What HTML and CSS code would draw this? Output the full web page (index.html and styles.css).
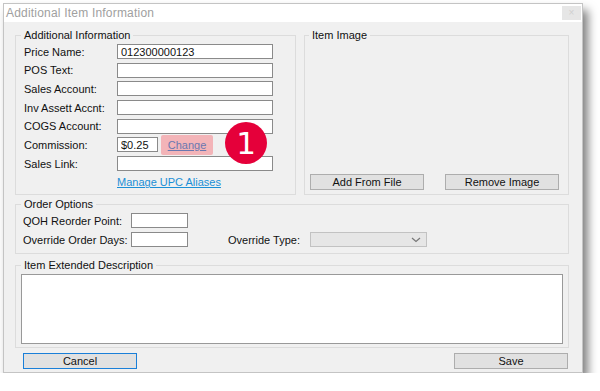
FILE: index.html
```html
<!DOCTYPE html>
<html lang="en">
<head>
    <meta charset="UTF-8">
    <meta name="viewport" content="width=device-width, initial-scale=1.0">
    <title>Additional Item Information</title>
    <link rel="stylesheet" href="styles.css">
</head>
<body>
    <div class="dialog">
        <div class="titlebar">
            <span class="title">Additional Item Information</span>
            <span class="close-btn">&#215;</span>
        </div>

        <div class="content">
            <div class="top-row">
                <fieldset class="group info-group">
                    <legend>Additional Information</legend>
                    <div class="info-grid">
                        <label>Price Name:</label>
                        <input class="field" type="text" value="012300000123">
                        <label>POS Text:</label>
                        <input class="field" type="text">
                        <label>Sales Account:</label>
                        <input class="field" type="text">
                        <label>Inv Assett Accnt:</label>
                        <input class="field" type="text">
                        <label>COGS Account:</label>
                        <input class="field" type="text">
                        <label>Commission:</label>
                        <div class="commission">
                            <input class="field small" type="text" value="$0.25">
                            <a href="#" class="change-link">Change</a>
                            <span class="badge">1</span>
                        </div>
                        <label>Sales Link:</label>
                        <input class="field" type="text">
                    </div>
                    <a href="#" class="upc-link">Manage UPC Aliases</a>
                </fieldset>

                <fieldset class="group image-group">
                    <legend>Item Image</legend>
                    <div class="image-buttons">
                        <button class="btn">Add From File</button>
                        <button class="btn">Remove Image</button>
                    </div>
                </fieldset>
            </div>

            <fieldset class="group order-group">
                <legend>Order Options</legend>
                <div class="order-row">
                    <label class="order-label">QOH Reorder Point:</label>
                    <input class="field short" type="text">
                </div>
                <div class="order-row">
                    <label class="order-label">Override Order Days:</label>
                    <input class="field short" type="text">
                    <label class="type-label">Override Type:</label>
                    <div class="select">
                        <svg width="10" height="6" viewBox="0 0 10 6"><path d="M1 1 L5 4.5 L9 1" fill="none" stroke="#777" stroke-width="1.2"/></svg>
                    </div>
                </div>
            </fieldset>

            <fieldset class="group desc-group">
                <legend>Item Extended Description</legend>
                <textarea class="desc"></textarea>
            </fieldset>

            <div class="footer">
                <button class="btn cancel">Cancel</button>
                <button class="btn">Save</button>
            </div>
        </div>
    </div>
</body>
</html>
```

FILE: styles.css
```css
body {
    margin: 0;
    padding: 3px 0 0 3px;
    background: #fff;
    font-family: "Liberation Sans", Arial, sans-serif;
    font-size: 11px;
    color: #111;
}
.dialog {
    width: 580px;
    height: 370px;
    box-sizing: border-box;
    border: 1px solid #c4c4c4;
    background: #f0f0f0;
    box-shadow: 5px 7px 9px rgba(0,0,0,0.5);
    display: flex;
    flex-direction: column;
}
.titlebar {
    height: 18px;
    background: #fff;
    display: flex;
    align-items: center;
    justify-content: space-between;
    padding: 0 1px 0 2px;
}
.title {
    font-size: 12px;
    color: #a0a0a0;
    letter-spacing: 0.2px;
}
.close-btn {
    width: 19px;
    height: 14px;
    background: #e6e6e6;
    color: #d0d0d0;
    font-size: 10px;
    line-height: 14px;
    text-align: center;
}
.content {
    padding: 7px 13px 3px 11px;
    display: flex;
    flex-direction: column;
}
.group {
    margin: 0;
    padding: 0;
    border: 1px solid #dcdcdc;
    min-width: 0;
}
.group legend {
    padding: 0 3px;
    line-height: 12px;
    font-size: 11px;
}
.top-row {
    display: flex;
    gap: 8px;
    height: 166px;
}
.info-group {
    width: 281px;
    box-sizing: border-box;
    padding: 3px 0 0 8px;
}
.info-group legend {
    margin-left: -3px;
}
.info-grid {
    display: grid;
    grid-template-columns: 93px 156px;
    grid-auto-rows: 15px;
    row-gap: 3.7px;
    align-items: center;
}
.field {
    box-sizing: border-box;
    height: 15px;
    border: 1px solid #8a8a8a;
    background: #fff;
    font-family: inherit;
    font-size: 11px;
    padding: 0 3px;
    margin: 0;
    color: #111;
}
.commission {
    display: flex;
    align-items: center;
    gap: 3px;
    position: relative;
}
.field.small {
    width: 41px;
}
.change-link {
    background: #f3b4b8;
    color: #6b78b0;
    height: 20px;
    line-height: 20px;
    width: 52px;
    text-align: center;
    border-radius: 2px;
    margin: -3px 0;
}
.badge {
    position: absolute;
    left: 108px;
    top: -15px;
    width: 42px;
    height: 42px;
    border-radius: 50%;
    background: #e5003a;
    color: #fff;
    font-family: "DejaVu Sans", sans-serif;
    font-size: 31px;
    line-height: 42px;
    text-align: center;
}
.upc-link {
    display: block;
    margin: 5px 0 0 93px;
    color: #1b8fd6;
}
.image-group {
    flex: 1;
    display: flex;
    flex-direction: column;
    justify-content: flex-end;
    padding: 0 9px 4px 5px;
}
.image-group legend {
    margin-left: -1px;
}
.image-buttons {
    display: flex;
    justify-content: space-between;
}
.btn {
    box-sizing: border-box;
    width: 114px;
    height: 16px;
    border: 1px solid #adadad;
    background: #e1e1e1;
    font-family: inherit;
    font-size: 11px;
    color: #111;
    padding: 0;
    line-height: 14px;
}
.order-group {
    margin-top: 3px;
    padding: 3px 0 6px 7px;
    display: flex;
    flex-direction: column;
    gap: 4px;
}
.order-group legend {
    margin-left: -2px;
}
.order-row {
    display: flex;
    align-items: center;
}
.order-label {
    width: 108px;
}
.field.short {
    width: 57px;
}
.type-label {
    margin-left: 40px;
    width: 82px;
}
.select {
    box-sizing: border-box;
    width: 117px;
    height: 15px;
    border: 1px solid #c2c2c2;
    background: #e6e6e6;
    display: flex;
    align-items: center;
    justify-content: flex-end;
    padding-right: 5px;
}
.desc-group {
    margin-top: 5px;
    padding: 3px 0 3px 5px;
}
.desc {
    display: block;
    box-sizing: border-box;
    width: 542px;
    height: 70px;
    border: 1px solid #999;
    background: #fff;
    resize: none;
    margin: 0;
}
.footer {
    margin-top: 5px;
    display: flex;
    justify-content: space-between;
    padding: 0 1px 0 8px;
}
.btn.cancel {
    border-color: #1a7fd8;
}
```
